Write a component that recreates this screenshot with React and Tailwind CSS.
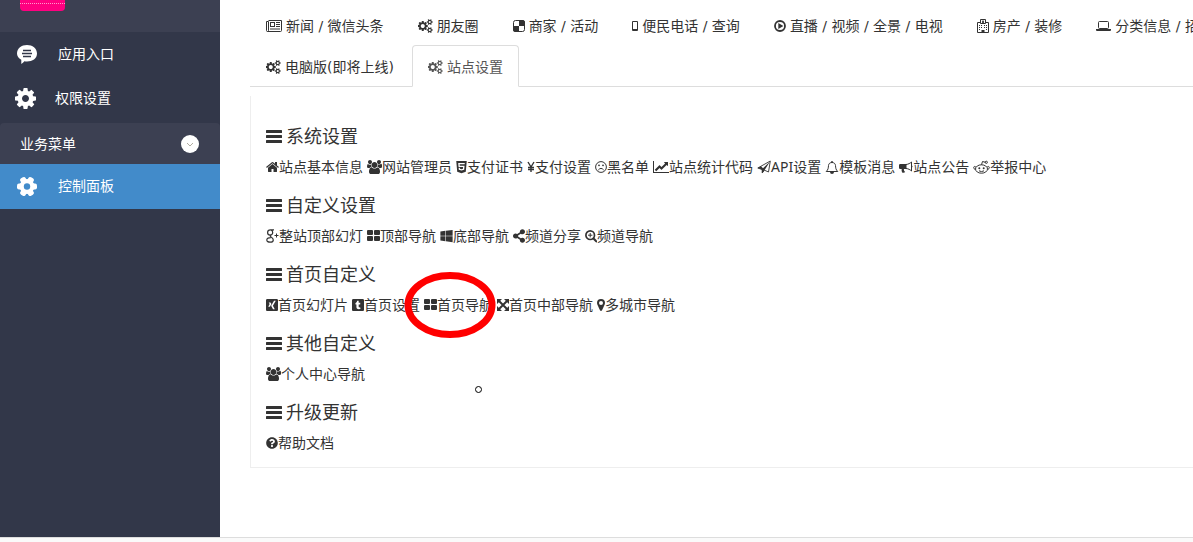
import {
  FaHtml5,
  FaQuestionCircle,
  FaShareAlt,
  FaTumblrSquare,
  FaWindows,
  FaXingSquare,
} from 'react-icons/fa'

const COGS =
  'M832 896q0-106-75-181t-181-75-181 75-75 181 75 181 181 75 181-75 75-181zm768 512q0-52-38-90t-90-38-90 38-38 90q0 53 37.5 90.5t90.5 37.5 90.5-37.5 37.5-90.5zm0-1024q0-52-38-90t-90-38-90 38-38 90q0 53 37.5 90.5t90.5 37.5 90.5-37.5 37.5-90.5zm-384 421v185q0 10-7 19.5t-16 10.5l-155 24q-11 35-32 76 34 48 90 115 7 11 7 20 0 12-7 19-23 30-82.5 89.5t-78.5 59.5q-11 0-21-7l-115-90q-37 19-77 31-11 108-23 155-7 24-30 24h-186q-11 0-20-7.5t-10-17.5l-23-153q-34-10-75-31l-118 89q-7 7-20 7-11 0-21-8-144-133-144-160 0-9 7-19 10-14 41-53t47-61q-23-44-35-82l-152-24q-10-1-17-9.5t-7-19.5v-185q0-10 7-19.5t16-10.5l155-24q11-35 32-76-34-48-90-115-7-11-7-20 0-12 7-20 22-30 82-89t79-59q11 0 21 7l115 90q34-18 77-32 11-108 23-154 7-24 30-24h186q11 0 20 7.5t10 17.5l23 153q34 10 75 31l118-89q8-7 20-7 11 0 21 8 144 133 144 160 0 8-7 19-12 16-42 54t-45 60q23 48 34 82l152 23q10 2 17 10.5t7 19.5zm640 533v140q0 16-149 31-12 27-30 52 51 113 51 138 0 4-4 7-122 71-124 71-8 0-46-47t-52-68q-20 2-30 2t-30-2q-14 21-52 68t-46 47q-2 0-124-71-4-3-4-7 0-25 51-138-18-25-30-52-149-15-149-31v-140q0-16 149-31 13-29 30-52-51-113-51-138 0-4 4-7 4-2 35-20t59-34 30-16q8 0 46 46.5t52 67.5q20-2 30-2t30 2q51-71 92-112l6-2q4 0 124 70 4 3 4 7 0 25-51 138 17 23 30 52 149 15 149 31zm0-1024v140q0 16-149 31-12 27-30 52 51 113 51 138 0 4-4 7-122 71-124 71-8 0-46-47t-52-68q-20 2-30 2t-30-2q-14 21-52 68t-46 47q-2 0-124-71-4-3-4-7 0-25 51-138-18-25-30-52-149-15-149-31v-140q0-16 149-31 13-29 30-52-51-113-51-138 0-4 4-7 4-2 35-20t59-34 30-16q8 0 46 46.5t52 67.5q20-2 30-2t30 2q51-71 92-112l6-2q4 0 124 70 4 3 4 7 0 25-51 138 17 23 30 52 149 15 149 31z'

const COG =
  'M1152 896q0-106-75-181t-181-75-181 75-75 181 75 181 181 75 181-75 75-181zm512-109v222q0 12-8 23t-20 13l-185 28q-19 54-39 91 35 50 107 138 10 12 10 25t-9 23q-27 37-99 108t-94 71q-12 0-26-9l-138-108q-44 23-91 38-16 136-29 186-7 28-36 28h-222q-14 0-24.5-8.5t-11.5-21.5l-28-184q-49-16-90-37l-141 107q-10 9-25 9-14 0-25-11-126-114-165-168-7-10-7-23 0-12 8-23 15-21 51-66.5t54-70.5q-27-50-41-99l-183-27q-13-2-21-12.5t-8-23.5v-222q0-12 8-23t19-13l186-28q14-46 39-92-40-57-107-138-10-12-10-24 0-10 9-23 26-36 98.5-107.5t94.5-71.5q13 0 26 10l138 107q44-23 91-38 16-136 29-186 7-28 36-28h222q14 0 24.5 8.5t11.5 21.5l28 184q49 16 90 37l142-107q9-9 24-9 13 0 25 10 129 119 165 170 7 8 7 22 0 12-8 23-15 21-51 66.5t-54 70.5q26 50 41 98l183 28q13 2 21 12.5t8 23.5z'

const USERS =
  'M657 896q-162 5-265 128h-134q-82 0-138-40.5t-56-118.5q0-353 124-353 6 0 43.5 21t97.5 42.5 119 21.5q67 0 133-23-5 37-5 66 0 159 90 288zm1071 637q0 120-73 189.5t-194 69.5h-874q-121 0-194-69.5t-73-189.5q0-53 3.5-103.5t14-109 26.5-108.5 43-97.5 62-81 85.5-53.5 111.5-20q10 0 43 21.5t73 48 107 48 135 21.5 135-21.5 107-48 73-48 43-21.5q61 0 111.5 20t85.5 53.5 62 81 43 97.5 26.5 108.5 14 109 3.5 103.5zm-1024-1277q0 106-75 181t-181 75-181-75-75-181 75-181 181-75 181 75 75 181zm704 384q0 159-112.5 271.5t-271.5 112.5-271.5-112.5-112.5-271.5 112.5-271.5 271.5-112.5 271.5 112.5 112.5 271.5zm576 225q0 78-56 118.5t-138 40.5h-134q-103-123-265-128 90-129 90-288 0-29-5-66 66 23 133 23 59 0 119-21.5t97.5-42.5 43.5-21q124 0 124 353zm-128-609q0 106-75 181t-181 75-181-75-75-181 75-181 181-75 181 75 75 181z'

const HOME =
  'M1472 992v480q0 26-19 45t-45 19h-384v-384h-256v384h-384q-26 0-45-19t-19-45v-480q0-1 .5-3t.5-3l575-474 575 474q1 2 1 6zm223-69l-62 74q-8 9-21 11h-3q-13 0-21-7l-692-577-692 577q-12 8-24 7-13-2-21-11l-62-74q-8-10-7-23.5t11-21.5l719-599q32-26 76-26t76 26l244 204v-195q0-14 9-23t23-9h192q14 0 23 9t9 23v408l219 182q10 8 11 21.5t-7 23.5z'

const LINE_CHART =
  'M2048 1536v128h-2048v-1536h128v1408h1920zm-128-1248v435q0 21-19.5 29.5t-35.5-7.5l-121-121-633 633q-10 10-23 10t-23-10l-233-233-416 416-192-192 585-585q10-10 23-10t23 10l233 233 464-464-121-121q-16-16-7.5-35.5t29.5-19.5h435q14 0 23 9t9 23z'

function Svg({ box, className, children }) {
  return (
    <svg viewBox={box} className={`shrink-0 ${className}`} fill="currentColor" aria-hidden="true">
      {children}
    </svg>
  )
}

const CogsIcon = () => (
  <Svg box="0 0 1856 1792" className="h-[14px] w-[15px]"><path d={COGS} /></Svg>
)
const UsersIcon = () => (
  <Svg box="64 0 1920 1792" className="h-[14px] w-[15px]"><path d={USERS} /></Svg>
)
const HomeIcon = () => (
  <Svg box="64 0 1664 1792" className="h-[14px] w-[13px]"><path d={HOME} /></Svg>
)
const ChartIcon = () => (
  <Svg box="0 0 2048 1792" className="h-[14px] w-[16px]"><path d={LINE_CHART} /></Svg>
)

const NewsIcon = () => (
  <Svg box="0 0 16 14" className="h-[14px] w-[16px]">
    <path d="M2.5 1.5h13v10a1 1 0 0 1-1 1h-13a1 1 0 0 1-1-1v-9h2v9a1 1 0 0 1-1 1" fill="none" stroke="currentColor" />
    <path d="M4 3h5v5H4zM5 4v3h3V4zM10 3h4v1h-4zM10 5h4v1h-4zM10 7h4v1h-4zM4 9.500h10v1H4z" fillRule="evenodd" />
  </Svg>
)

const DeliciousIcon = () => (
  <Svg box="0 0 12 14" className="h-[14px] w-[12px]">
    <rect x="0.500" y="1.500" width="11" height="11" rx="2" fill="none" stroke="currentColor" />
    <path d="M6 1h3.500A2.500 2.500 0 0 1 12 3.500V7H6zM0 7h6v6H2.500A2.500 2.500 0 0 1 0 10.500z" />
  </Svg>
)

const MobileIcon = () => (
  <Svg box="0 0 6 14" className="h-[14px] w-[6px]">
    <path fillRule="evenodd" d="M1 2h4a1 1 0 0 1 1 1v8a1 1 0 0 1-1 1H1a1 1 0 0 1-1-1V3a1 1 0 0 1 1-1zM1 3v7h4V3z" />
  </Svg>
)

const PlayIcon = () => (
  <Svg box="0 0 12 14" className="h-[14px] w-[12px]">
    <circle cx="6" cy="7" r="5" fill="none" stroke="currentColor" strokeWidth="1.800" />
    <path d="M4.300 4L9.400 7l-5.100 3z" />
  </Svg>
)

const BuildingIcon = () => (
  <Svg box="0 0 12 14" className="h-[14px] w-[12px]">
    <path d="M3.500 3.500h-3v10h11v-10h-3M3.500 4.500v-4h5v4z" fill="none" stroke="currentColor" />
    <path d="M5 1.500h.7v1h.6v-1H7v3h-.7v-1h-.6v1H5zM2 6h1v1H2zM4 6h1v1H4zM7 6h1v1H7zM9 6h1v1H9zM2 8h1v1H2zM4 8h1v1H4zM7 8h1v1H7zM9 8h1v1H9zM2 10h1v1H2zM9 10h1v1H9zM4.500 11h3v3h-3z" />
  </Svg>
)

const LaptopIcon = () => (
  <Svg box="0 0 15 14" className="h-[14px] w-[15px]">
    <rect x="2.500" y="2.500" width="10" height="7" rx="1" fill="none" stroke="currentColor" />
    <path d="M0 10h15v1a1 1 0 0 1-1 1H1a1 1 0 0 1-1-1z" />
  </Svg>
)

const YenIcon = () => (
  <Svg box="0 0 8 14" className="h-[14px] w-[8px]">
    <path d="M1 2l3 5 3-5M4 7v5M1 7.500h6M1 9.500h6" fill="none" stroke="currentColor" strokeWidth="1.400" />
  </Svg>
)

const FrownIcon = () => (
  <Svg box="0 0 12 14" className="h-[14px] w-[12px]">
    <circle cx="6" cy="7" r="5.400" fill="none" stroke="currentColor" />
    <path d="M3.300 10Q6 6.800 8.700 10" fill="none" stroke="currentColor" />
    <circle cx="4" cy="5.300" r="0.900" />
    <circle cx="8" cy="5.300" r="0.900" />
  </Svg>
)

const PlaneIcon = () => (
  <Svg box="0 0 14 14" className="h-[14px] w-[14px]">
    <path d="M.8 8L13.300 1 11.500 12 7.500 10.200 5.200 13V9.600z" fill="none" stroke="currentColor" strokeWidth="0.900" strokeLinejoin="round" />
    <path d="M.8 8L4 6.200 6 8.300 13 1.500 7.500 10.200 5 13.200V9.600z" />
  </Svg>
)

const BellIcon = () => (
  <Svg box="0 0 14 14" className="h-[14px] w-[14px]">
    <path d="M1.200 11.500C3.300 9.700 3.300 7.800 3.500 5.500 3.700 3.600 5 2.500 7 2.500s3.300 1.100 3.500 3c.2 2.300.2 4.200 2.300 6z" fill="none" stroke="currentColor" strokeLinejoin="round" />
    <path d="M6.300 1h1.400v1.500H6.300zM5 12h4a2 2 0 0 1-4 0z" />
  </Svg>
)

const BullhornIcon = () => (
  <Svg box="0 0 14 14" className="h-[14px] w-[14px]">
    <path d="M7 4.500c2.500-.2 4-1.300 5.500-2.500v9C11 9.700 9.500 8.700 7 8.500" fill="none" stroke="currentColor" />
    <path d="M1.200 4H7.500v5H5c-.3 1.200 0 2 1.200 3-.8 1-2.600 1-3.200.2C2.500 11 2.500 10 2.700 9H1.200A1.200 1.200 0 0 1 0 7.800V5.200A1.200 1.200 0 0 1 1.200 4zM12.500 5.500a1 1 0 0 1 0 2z" />
  </Svg>
)

const RedditIcon = () => (
  <Svg box="0 0 17 14" className="h-[14px] w-[17px]">
    <g fill="none" stroke="currentColor">
      <ellipse cx="8.500" cy="9" rx="6" ry="4.200" />
      <path d="M3 7.300C1 5 -.5 8 2 9.500M14 7.300c2-2.300 3.500.7 1 2.200M8.500 4.800l1-3.300 3 .8M6 10.800q2.500 1.600 5 0" />
      <circle cx="13.300" cy="2.300" r="1.100" />
    </g>
    <circle cx="6.300" cy="8.200" r="1" />
    <circle cx="10.700" cy="8.200" r="1" />
  </Svg>
)

const GooglePlusIcon = () => (
  <Svg box="0 0 13 14" className="h-[14px] w-[13px]">
    <g fill="none" stroke="currentColor">
      <path d="M8 .8H4.500C2.700.8 1.600 2 1.600 3.500S2.700 6.100 4.200 6.100s2.500-1 2.500-2.600S5.800 1 4.800.8" strokeWidth="1.200" />
      <path d="M4.800 6c-1 .8-.6 1.300.3 2 1.400.9 2.200 1.600 2.200 2.900 0 1.500-1.300 2.300-3.200 2.300S.8 12.400.8 11c0-1.600 1.700-2.300 4-2.400" strokeWidth="1.200" />
      <path d="M10.500 4.500v4M8.500 6.500h4" />
    </g>
  </Svg>
)

const ThLargeIcon = () => (
  <Svg box="0 0 13 14" className="h-[14px] w-[13px]">
    <rect x="0" y="1" width="6" height="5" rx="1" />
    <rect x="7" y="1" width="6" height="5" rx="1" />
    <rect x="0" y="7" width="6" height="5" rx="1" />
    <rect x="7" y="7" width="6" height="5" rx="1" />
  </Svg>
)

const ZoomIcon = () => (
  <Svg box="0 0 12 14" className="h-[14px] w-[12px]">
    <circle cx="5.200" cy="6.200" r="4.300" fill="none" stroke="currentColor" strokeWidth="1.700" />
    <path d="M8.500 9.500l2.800 2.800" fill="none" stroke="currentColor" strokeWidth="2.200" strokeLinecap="round" />
    <path d="M3 6.200h4.400M5.200 4v4.400" fill="none" stroke="currentColor" />
  </Svg>
)

const ArrowsIcon = () => (
  <Svg box="0 0 12 14" className="h-[14px] w-[12px]">
    <path d="M2 3l8 8M10 3l-8 8" fill="none" stroke="currentColor" strokeWidth="2" />
    <path d="M0 1h5L0 6zM12 1v5L7 1zM0 13V8l5 5zM12 13H7l5-5z" />
  </Svg>
)

const MarkerIcon = () => (
  <Svg box="0 0 8 14" className="h-[14px] w-[8px]">
    <path fillRule="evenodd" d="M4 1a4 4 0 0 1 4 4c0 1.500-2 5-3 7.300-.4.900-1.600.9-2 0C2 10 0 6.500 0 5a4 4 0 0 1 4-4zm0 2a2 2 0 1 0 0 4 2 2 0 0 0 0-4z" />
  </Svg>
)

const BarsIcon = () => (
  <Svg box="0 0 16 14" className="h-[14px] w-[16px]">
    <rect y="1" width="16" height="3" rx="0.500" />
    <rect y="6" width="16" height="3" rx="0.500" />
    <rect y="11" width="16" height="3" rx="0.500" />
  </Svg>
)

const tabs = [
  { label: '新闻 / 微信头条', icon: <NewsIcon /> },
  { label: '朋友圈', icon: <CogsIcon /> },
  { label: '商家 / 活动', icon: <DeliciousIcon /> },
  { label: '便民电话 / 查询', icon: <MobileIcon /> },
  { label: '直播 / 视频 / 全景 / 电视', icon: <PlayIcon /> },
  { label: '房产 / 装修', icon: <BuildingIcon /> },
  { label: '分类信息 / 招聘', icon: <LaptopIcon /> },
]

const moreTabs = [
  { label: '电脑版(即将上线)', icon: <CogsIcon /> },
  { label: '站点设置', icon: <CogsIcon />, active: true },
]

const sections = [
  {
    title: '系统设置',
    links: [
      { label: '站点基本信息', icon: <HomeIcon /> },
      { label: '网站管理员', icon: <UsersIcon /> },
      { label: '支付证书', icon: <FaHtml5 className="h-[14px] w-[11px]" /> },
      { label: '支付设置', icon: <YenIcon /> },
      { label: '黑名单', icon: <FrownIcon /> },
      { label: '站点统计代码', icon: <ChartIcon /> },
      { label: 'API设置', icon: <PlaneIcon /> },
      { label: '模板消息', icon: <BellIcon /> },
      { label: '站点公告', icon: <BullhornIcon /> },
      { label: '举报中心', icon: <RedditIcon /> },
    ],
  },
  {
    title: '自定义设置',
    links: [
      { label: '整站顶部幻灯', icon: <GooglePlusIcon /> },
      { label: '顶部导航', icon: <ThLargeIcon /> },
      { label: '底部导航', icon: <FaWindows className="h-[14px] w-[13px]" /> },
      { label: '频道分享', icon: <FaShareAlt className="h-[14px] w-[12px]" /> },
      { label: '频道导航', icon: <ZoomIcon /> },
    ],
  },
  {
    title: '首页自定义',
    links: [
      { label: '首页幻灯片', icon: <FaXingSquare className="h-[14px] w-[12px]" /> },
      { label: '首页设置', icon: <FaTumblrSquare className="h-[14px] w-[12px]" /> },
      { label: '首页导航', icon: <ThLargeIcon />, marked: true },
      { label: '首页中部导航', icon: <ArrowsIcon /> },
      { label: '多城市导航', icon: <MarkerIcon /> },
    ],
  },
  {
    title: '其他自定义',
    links: [{ label: '个人中心导航', icon: <UsersIcon /> }],
  },
  {
    title: '升级更新',
    links: [{ label: '帮助文档', icon: <FaQuestionCircle className="h-[14px] w-[12px]" /> }],
  },
]

function Tab({ label, icon, active }) {
  return (
    <li className="-mb-px mr-0.5 shrink-0">
      <a
        href="#"
        className={
          active
            ? 'flex h-[42px] items-center gap-1 rounded-t border border-b-white border-[#ddd] bg-white px-[15px] pt-0.5 text-[#555]'
            : 'flex h-[42px] items-center gap-1 border border-transparent px-[15px] pt-0.5'
        }
      >
        {icon}
        <span>{label}</span>
      </a>
    </li>
  )
}

// red ring around the link, with the round pointer below it
function Mark() {
  return (
    <svg
      className="pointer-events-none absolute -left-5 -top-6 h-[124px] w-[94px]"
      viewBox="0 0 94 124"
      fill="none"
      aria-hidden="true"
    >
      <ellipse cx="46" cy="34" rx="42" ry="29.500" stroke="#f00" strokeWidth="7" />
      <circle cx="74.500" cy="118.500" r="3" fill="#fff" stroke="#000" />
    </svg>
  )
}

function Section({ title, links }) {
  return (
    <section>
      <h4 className="mb-[11px] flex items-center gap-1 text-[18px] leading-5">
        <BarsIcon />
        {title}
      </h4>
      <ul className="flex gap-1">
        {links.map((link) => (
          <li key={link.label} className="relative shrink-0">
            <a href="#" className="flex items-center">
              {link.icon}
              <span>{link.label}</span>
            </a>
            {link.marked && <Mark />}
          </li>
        ))}
      </ul>
    </section>
  )
}

function Sidebar() {
  return (
    <aside className="w-[220px] shrink-0 bg-[#323749] text-white">
      <div className="h-8 bg-[#3c4052] px-5">
        <div className="h-[11px] w-[45px] rounded-b bg-[#ff0080] pt-[3px]">
          <div className="border-t border-dotted border-[#ff9acb]" />
        </div>
      </div>
      <nav>
        <a href="#" className="flex h-11 items-center gap-[21px] pl-[17px]">
          <svg viewBox="0 0 20 20" className="h-5 w-5 shrink-0" aria-hidden="true">
            <path d="M10 1c5.500 0 10 3.400 10 8.500s-4.500 8-10 8c-.9 0-1.800-.1-2.600-.3C6.500 18.300 5.500 19.300 4.300 20V15.800C1.500 14.300 0 12.100 0 9.500 0 4.400 4.500 1 10 1z" fill="#fff" />
            <path d="M6 6.500h8M5 9.500h10M6 12.500h8" stroke="#323749" strokeWidth="1.300" />
          </svg>
          应用入口
        </a>
        <a href="#" className="mb-[3px] flex h-11 items-center gap-[19px] pl-[15px]">
          <Svg box="128 128 1536 1536" className="h-[21px] w-[21px]"><path d={COG} /></Svg>
          权限设置
        </a>
        <button type="button" className="flex h-[41px] w-full items-center justify-between rounded-t bg-[#3c4052] pl-5 pr-[21px]">
          业务菜单
          <svg viewBox="0 0 18 18" className="h-[18px] w-[18px]" aria-hidden="true">
            <circle cx="9" cy="9" r="9" fill="#fff" />
            <path d="M6 8l3 3 3-3" fill="none" stroke="#b0aca0" />
          </svg>
        </button>
        <a href="#" className="flex h-[45px] items-center gap-[21px] bg-[#428bca] pb-0.5 pl-[17px]">
          <svg viewBox="0 0 20 20" className="h-5 w-5 shrink-0" aria-hidden="true">
            <circle cx="10" cy="10.500" r="7.500" fill="#fff" />
            <g fill="#fff">
              <rect x="0" y="7.500" width="20" height="6" rx="2" />
              <rect x="0" y="7.500" width="20" height="6" rx="2" transform="rotate(60 10 10.500)" />
              <rect x="0" y="7.500" width="20" height="6" rx="2" transform="rotate(120 10 10.500)" />
            </g>
            <circle cx="10" cy="10.500" r="3.200" fill="#428bca" />
          </svg>
          控制面板
        </a>
      </nav>
    </aside>
  )
}

function App() {
  return (
    <div className="flex min-h-screen flex-col overflow-hidden bg-[#fafafa] font-['Noto_Sans','Noto_Sans_CJK_SC',sans-serif] text-[14px] leading-5 text-[#333]">
      <div className="flex flex-1 bg-white">
        <Sidebar />
        <main className="min-w-0 flex-1 overflow-hidden whitespace-nowrap pl-[30px] pt-1">
          <div className="font-['DejaVu_Sans','Noto_Sans_CJK_SC',sans-serif]">
            <ul className="flex">
              {tabs.map((tab) => (
                <Tab key={tab.label} {...tab} />
              ))}
            </ul>
            <ul className="flex border-b border-[#ddd]">
              {moreTabs.map((tab) => (
                <Tab key={tab.label} {...tab} />
              ))}
            </ul>
          </div>
          <div className="mt-[9px] flex flex-col gap-[18px] border-b border-l border-[#eee] pb-[14px] pl-[15px] pt-[30px]">
            {sections.map((section) => (
              <Section key={section.title} {...section} />
            ))}
          </div>
        </main>
      </div>
      <footer className="h-[5px] border-t border-[#ddd]" />
    </div>
  )
}

export default App
